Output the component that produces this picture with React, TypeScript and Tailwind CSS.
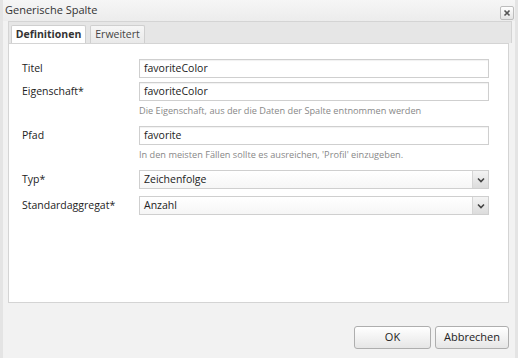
import React from "react";

const font = { fontFamily: '"Open Sans", "DejaVu Sans", sans-serif' };

function Field({ label, value, help }: { label: string; value: string; help?: string }) {
  return (
    <div className="flex flex-col">
      <div className="flex items-center">
        <div className="w-[117px] text-[10.5px] text-[#222]">{label}</div>
        <div className="w-[350px] h-[19px] border border-[#cfcfcf] bg-white flex items-center px-[4px] text-[10.5px] text-[#222] shadow-[inset_0_1px_1px_rgba(0,0,0,0.06)]">
          {value}
        </div>
      </div>
      {help && (
        <div className="ml-[117px] mt-[4px] text-[9.2px] text-[#888] leading-[12px]">{help}</div>
      )}
    </div>
  );
}

function Select({ label, value }: { label: string; value: string }) {
  return (
    <div className="flex items-center">
      <div className="w-[117px] text-[10.5px] text-[#222]">{label}</div>
      <div className="w-[350px] h-[19px] border border-[#cfcfcf] bg-gradient-to-b from-white to-[#f6f6f6] flex items-center text-[10.5px] text-[#222]">
        <div className="flex-1 px-[4px]">{value}</div>
        <div className="w-[16px] h-full border-l border-[#d6d6d6] bg-gradient-to-b from-[#f4f4f4] to-[#dcdcdc] flex items-center justify-center">
          <svg width="8" height="6" viewBox="0 0 8 6">
            <path d="M1 1.5 L4 4.5 L7 1.5" stroke="#444" strokeWidth="1.6" fill="none" />
          </svg>
        </div>
      </div>
    </div>
  );
}

export default function App() {
  return (
    <div style={font} className="w-[518px] h-[358px] bg-[#f2f2f2] flex flex-col border-l-[3px] border-r-[3px] border-[#e4e4e4] relative overflow-hidden">
      {/* title bar */}
      <div className="h-[21px] flex items-center justify-between pl-[2px] pr-[1px] bg-gradient-to-b from-[#f6f6f6] to-[#ececec]">
        <span className="text-[11px] text-[#333]">Generische Spalte</span>
        <div className="w-[14px] h-[14px] mt-[4px] border border-[#bdbdbd] rounded-[2px] bg-gradient-to-b from-white to-[#e4e4e4] flex items-center justify-center">
          <svg width="8" height="8" viewBox="0 0 8 8">
            <path d="M1.5 1.5 L6.5 6.5 M6.5 1.5 L1.5 6.5" stroke="#555" strokeWidth="1.6" />
          </svg>
        </div>
      </div>
      {/* panel */}
      <div className="ml-[5px] mr-[3px] flex flex-col">
        <div className="h-[22px] bg-[#e6e6e6] border border-[#d4d4d4] border-b-0 flex items-end pl-[2px] gap-[4px]">
          <div className="h-[19px] w-[75px] bg-white border border-[#cfcfcf] border-b-0 rounded-t-[2px] flex items-center justify-center text-[10.5px] font-bold text-[#333] -mb-px">
            Definitionen
          </div>
          <div className="h-[18px] w-[55px] bg-gradient-to-b from-[#f6f6f6] to-[#e9e9e9] border border-[#cfcfcf] border-b-0 rounded-t-[2px] flex items-center justify-center text-[10.5px] text-[#444]">
            Erweitert
          </div>
        </div>
        <div className="h-[260px] bg-white border border-[#d4d4d4] mr-[3px] pl-[13px] pt-[15px] flex flex-col">
          <div className="flex flex-col gap-[4px]">
            <Field label="Titel" value="favoriteColor" />
            <Field label="Eigenschaft*" value="favoriteColor" help="Die Eigenschaft, aus der die Daten der Spalte entnommen werden" />
          </div>
          <div className="mt-[9px]">
            <Field label="Pfad" value="favorite" help="In den meisten Fällen sollte es ausreichen, 'Profil' einzugeben." />
          </div>
          <div className="mt-[9px] flex flex-col gap-[7px]">
            <Select label="Typ*" value="Zeichenfolge" />
            <Select label="Standardaggregat*" value="Anzahl" />
          </div>
        </div>
      </div>
      {/* buttons */}
      <div className="flex justify-end gap-[4px] pr-[6px] mt-[23px]">
        <div className="w-[77px] h-[23px] border border-[#aeaeae] rounded-[3px] bg-gradient-to-b from-white to-[#e6e6e6] flex items-center justify-center text-[11px] text-[#222]">OK</div>
        <div className="w-[74px] h-[23px] border border-[#aeaeae] rounded-[3px] bg-gradient-to-b from-white to-[#e6e6e6] flex items-center justify-center text-[11px] text-[#222]">Abbrechen</div>
      </div>
    </div>
  );
}
